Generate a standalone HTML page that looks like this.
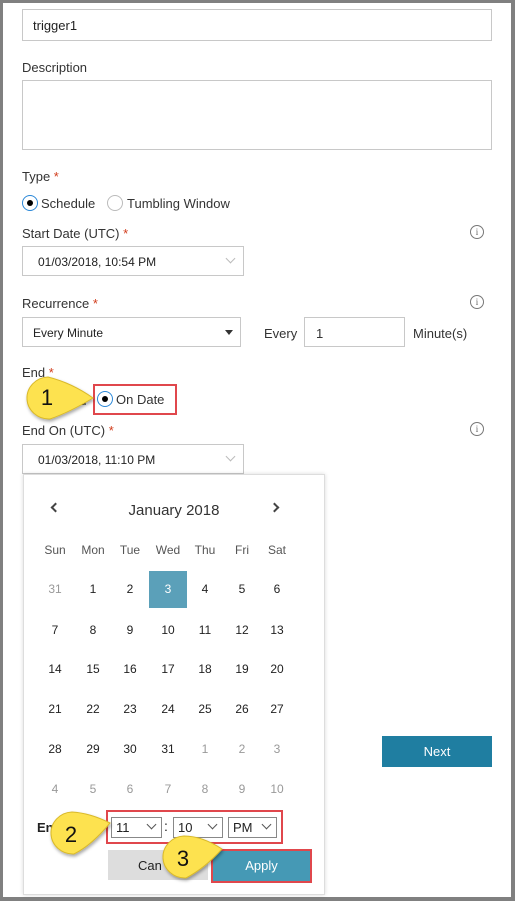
<!DOCTYPE html>
<html><head><meta charset="utf-8"><style>
*{box-sizing:border-box;margin:0;padding:0}
body{width:515px;height:901px;position:relative;overflow:hidden;background:#fff;font-family:"Liberation Sans",sans-serif;font-size:13px;color:#222}
.a{position:absolute}
.box{position:absolute;border:1px solid #c8c8c8;background:#fff}
.lbl{position:absolute;font-size:13px;color:#333}
.st{color:#d13b1a}
.t{position:absolute;font-size:12px;color:#222}
.chev{position:absolute;width:7px;height:7px;border-right:1.3px solid #bbb;border-bottom:1.3px solid #bbb;transform:rotate(45deg)}
.info{position:absolute;width:14px;height:14px;border:1px solid #777;border-radius:50%;font-size:9px;color:#666;text-align:center;line-height:12px;font-family:"Liberation Serif",serif}
.d{position:absolute;width:38px;text-align:center;font-size:12px;color:#222}
.g{color:#999}
.sel{position:absolute;border:1px solid #888;background:#fff;font-size:13px;padding:2px 0 0 4px;height:21px}
.sel i{position:absolute;right:6px;top:3px;width:7px;height:7px;border-right:1px solid #555;border-bottom:1px solid #555;transform:rotate(45deg)}
</style></head><body>
<div class="a" style="left:0;top:0;width:515px;height:3px;background:#808080"></div>
<div class="a" style="left:0;top:0;width:3px;height:901px;background:#808080"></div>
<div class="a" style="right:0;top:0;width:4px;height:901px;background:#808080"></div>
<div class="a" style="left:0;bottom:0;width:515px;height:4px;background:#808080"></div>

<div class="box" style="left:22px;top:9px;width:470px;height:32px"></div>
<div class="t" style="left:33px;top:18px;font-size:13px">trigger1</div>
<div class="lbl" style="left:22px;top:60px">Description</div>
<div class="box" style="left:22px;top:80px;width:470px;height:70px"></div>
<div class="lbl" style="left:22px;top:169px">Type <span class="st">*</span></div>
<div class="a" style="left:22px;top:195px;width:16px;height:16px;border:1px solid #2b88d8;border-radius:50%"></div>
<div class="a" style="left:27px;top:200px;width:6px;height:6px;background:#000;border-radius:50%"></div>
<div class="lbl" style="left:41px;top:196px">Schedule</div>
<div class="a" style="left:107px;top:195px;width:16px;height:16px;border:1px solid #bbb;border-radius:50%"></div>
<div class="lbl" style="left:127px;top:196px">Tumbling Window</div>
<div class="lbl" style="left:22px;top:226px">Start Date (UTC) <span class="st">*</span></div>
<div class="info" style="left:470px;top:225px">i</div>
<div class="box" style="left:22px;top:246px;width:222px;height:30px"></div>
<div class="t" style="left:38px;top:255px">01/03/2018, 10:54 PM</div>
<div class="chev" style="left:227px;top:255px"></div>
<div class="lbl" style="left:22px;top:296px">Recurrence <span class="st">*</span></div>
<div class="info" style="left:470px;top:295px">i</div>
<div class="box" style="left:22px;top:317px;width:219px;height:30px"></div>
<div class="t" style="left:33px;top:326px">Every Minute</div>
<div class="a" style="left:225px;top:330px;border-left:4px solid transparent;border-right:4px solid transparent;border-top:5px solid #333"></div>
<div class="lbl" style="left:264px;top:326px">Every</div>
<div class="box" style="left:304px;top:317px;width:101px;height:30px"></div>
<div class="lbl" style="left:316px;top:326px">1</div>
<div class="lbl" style="left:413px;top:326px">Minute(s)</div>
<div class="lbl" style="left:22px;top:365px">End <span class="st">*</span></div>
<div class="lbl" style="left:72px;top:393px">nd</div>
<div class="a" style="left:93px;top:384px;width:84px;height:31px;border:2px solid #e0474c"></div>
<div class="a" style="left:97px;top:391px;width:16px;height:16px;border:1px solid #2b88d8;border-radius:50%"></div>
<div class="a" style="left:102px;top:396px;width:6px;height:6px;background:#000;border-radius:50%"></div>
<div class="lbl" style="left:116px;top:392px">On Date</div>
<div class="lbl" style="left:22px;top:423px">End On (UTC) <span class="st">*</span></div>
<div class="info" style="left:470px;top:422px">i</div>
<div class="box" style="left:22px;top:444px;width:222px;height:30px"></div>
<div class="t" style="left:38px;top:453px">01/03/2018, 11:10 PM</div>
<div class="chev" style="left:227px;top:453px"></div>

<div class="a" style="left:382px;top:736px;width:110px;height:31px;background:#1f7ea1;color:#fff;text-align:center;line-height:31px;font-size:13px">Next</div>

<div class="a" style="left:23px;top:474px;width:302px;height:421px;background:#fff;border:1px solid #ddd;box-shadow:0 0 4px rgba(0,0,0,.15)"></div>
<div class="a" style="left:52px;top:504px;width:7px;height:7px;border-left:2px solid #444;border-bottom:2px solid #444;transform:rotate(45deg)"></div>
<div class="a" style="left:271px;top:504px;width:7px;height:7px;border-right:2px solid #444;border-top:2px solid #444;transform:rotate(45deg)"></div>
<div class="a" style="left:23px;top:502px;width:302px;text-align:center;font-size:15px;color:#333">January 2018</div>
<div class="a" style="left:149px;top:571px;width:38px;height:37px;background:#5ba0b9"></div>
<div id="cal"></div>
<script>
var xs=[55,93,130,168,205,242,277],h=['Sun','Mon','Tue','Wed','Thu','Fri','Sat'],s='';
for(var i=0;i<7;i++)s+='<div class="d" style="left:'+(xs[i]-19)+'px;top:543px;color:#555">'+h[i]+'</div>';
var d=31;var rows=[590,631,670,710,750,790];
for(var r=0;r<6;r++)for(var c=0;c<7;c++){var n=r*7+c;var v,g=false;if(n==0){v=31;g=true}else if(n<=31){v=n}else{v=n-31;g=true}
var col=g?'#999':(n==3?'#fff':'#222');s+='<div class="d" style="left:'+(xs[c]-19)+'px;top:'+(rows[r]-8)+'px;color:'+col+'">'+v+'</div>'}
document.getElementById('cal').innerHTML=s;
</script>
<div class="a" style="left:37px;top:820px;font-size:13px;font-weight:bold;color:#222">En</div>
<div class="a" style="left:106px;top:810px;width:177px;height:34px;border:2px solid #e0474c"></div>
<div class="sel" style="left:111px;top:817px;width:51px">11<i></i></div>
<div class="a" style="left:164px;top:818px;font-size:14px">:</div>
<div class="sel" style="left:173px;top:817px;width:50px">10<i></i></div>
<div class="sel" style="left:228px;top:817px;width:49px">PM<i></i></div>
<div class="a" style="left:108px;top:850px;width:100px;height:30px;background:#ddd;padding:8px 0 0 30px;font-size:13px">Can</div>
<div class="a" style="left:211px;top:849px;width:101px;height:34px;border:2px solid #e0474c"></div>
<div class="a" style="left:213px;top:851px;width:97px;height:30px;background:#4599b5;color:#fff;text-align:center;line-height:30px;font-size:13px">Apply</div>

<svg class="a" style="left:0;top:0" width="515" height="901">
<defs><filter id="sh"><feDropShadow dx="1" dy="2" stdDeviation="1.5" flood-opacity=".35"/></filter></defs>
<g fill="#fde24f" stroke="#d9b92a" stroke-width="1" filter="url(#sh)">
<path d="M48 377 A22 21 0 1 0 50 419 Q70 412 93 398 Q72 383 48 377Z"/>
<path d="M72 812 A22 21 0 1 0 74 854 Q92 845 110 823 Q90 813 72 812Z"/>
<path d="M184 836 A22 21 0 1 0 186 878 Q205 868 222 849 Q202 836 184 836Z"/>
</g>
<g font-family="Liberation Sans,sans-serif" font-size="22" fill="#111" text-anchor="middle">
<text x="47" y="405">1</text><text x="71" y="842">2</text><text x="183" y="866">3</text>
</g>
</svg>
</body></html>
